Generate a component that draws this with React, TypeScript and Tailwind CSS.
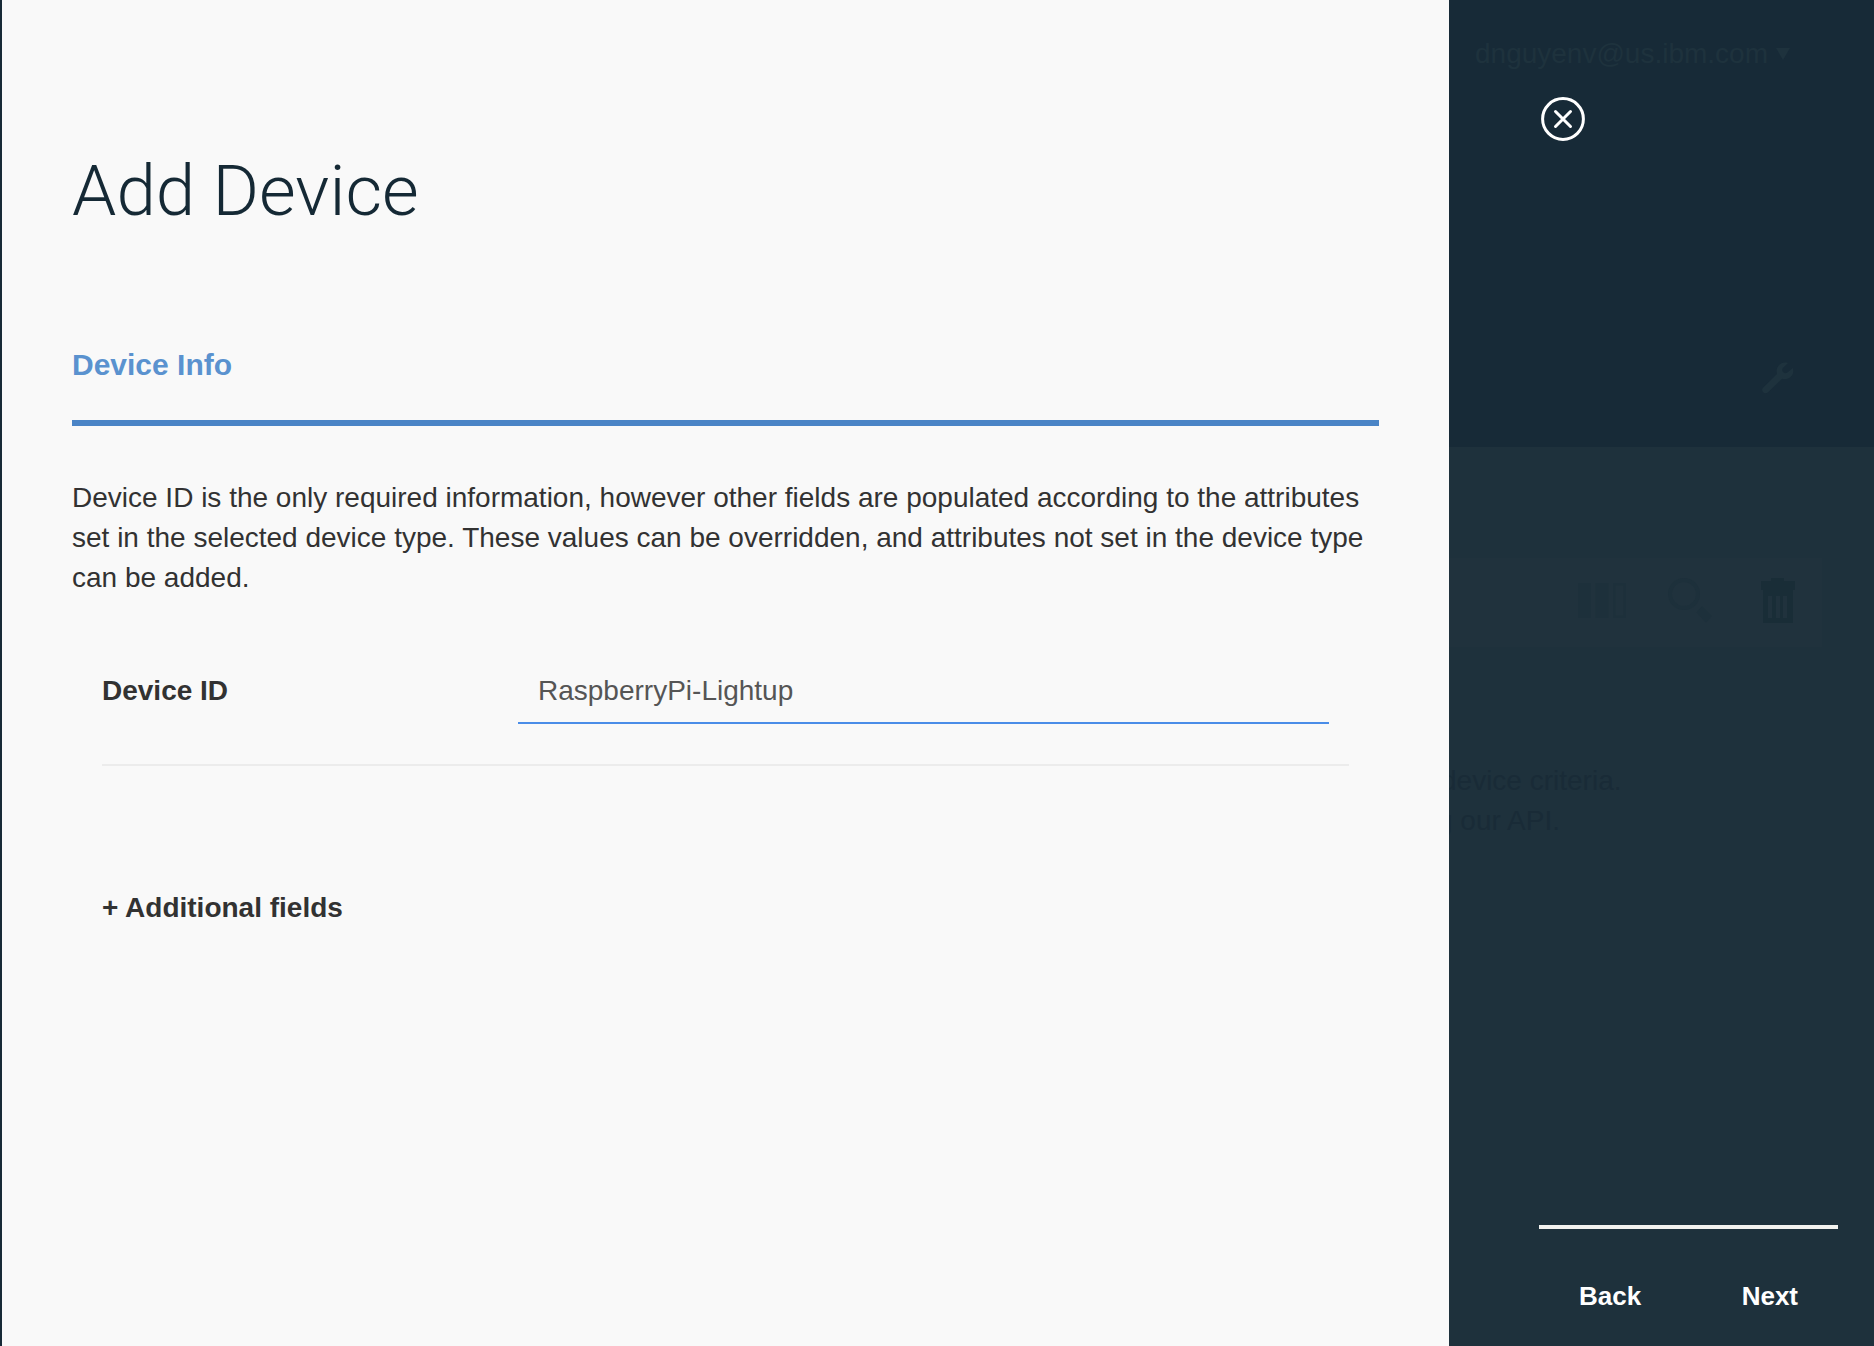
import { useState } from "react";

function CloseIcon() {
  return (
    <svg viewBox="0 0 44 44" className="size-11" fill="none" stroke="currentColor" aria-hidden="true">
      <circle cx="22" cy="22" r="20.4" strokeWidth="3" />
      <path d="M14.500 14.500l15 15M29.500 14.500l-15 15" strokeWidth="3" strokeLinecap="round" />
    </svg>
  );
}

function WrenchIcon() {
  return (
    <svg viewBox="0 0 32 32" className="size-8" aria-hidden="true">
      <path
        d="M26 1C19.500-1 13 4.500 15 12L1.300 25.400a3.300 3.300 0 0 0 4.700 4.800L20 16.800C27.500 18.500 33 12.500 30.800 6L25.500 10.500a3.300 3.300 0 0 1-4.600-4.600z"
        fill="currentColor"
      />
    </svg>
  );
}

function ColumnsIcon() {
  return (
    <svg viewBox="0 0 48 35" className="h-[35px] w-12" aria-hidden="true">
      <path d="M0 0h13v35H0zM17.500 0h13v35h-13z" fill="currentColor" />
      <path d="M36.200 1.200h10.600v32.600H36.200z" fill="none" stroke="currentColor" strokeWidth="2.400" />
    </svg>
  );
}

function SearchIcon() {
  return (
    <svg viewBox="0 0 44 45" className="h-[45px] w-11" aria-hidden="true">
      <circle cx="16" cy="16" r="14" fill="none" stroke="currentColor" strokeWidth="4" />
      <path d="M34 28l10 10-6 6.500-9.500-10z" fill="currentColor" />
    </svg>
  );
}

function TrashIcon() {
  return (
    <svg viewBox="0 0 34 45" className="h-[45px] w-[34px]" aria-hidden="true">
      <path
        fillRule="evenodd"
        d="M10 0h13v3h11v9h-2v33H2V12H0V3h10zM7 18v22h4V18zM15 18v22h4V18zM22 18v22h4V18z"
        fill="currentColor"
      />
    </svg>
  );
}

function DeviceForm() {
  const [deviceId, setDeviceId] = useState("RaspberryPi-Lightup");
  return (
    <section className="min-w-0 flex-1 bg-[#f9f9f9] px-[70px] pt-[151px] text-[28px] leading-10 text-[#323232]">
      <h1 className="font-['Roboto'] text-[71px] leading-20 font-light text-[#152935]">Add Device</h1>
      <h2 className="mt-[114px] border-b-6 border-[#4a84c6] pb-[35px] text-[30px] leading-10 font-bold text-[#5a92cf]">
        Device Info
      </h2>
      <p className="mt-[52px]">
        Device ID is the only required information, however other fields are populated according to the attributes set
        in the selected device type. These values can be overridden, and attributes not set in the device type can be
        added.
      </p>
      <div className="mx-[30px] mt-[73px] flex border-b-2 border-[#ececec] pr-5 pb-10">
        <label htmlFor="device-id" className="w-[416px] shrink-0 font-bold">
          Device ID
        </label>
        <input
          id="device-id"
          type="text"
          value={deviceId}
          onChange={(event) => setDeviceId(event.target.value)}
          className="h-[53px] min-w-0 flex-1 border-b-2 border-[#4a8de8] bg-transparent px-5 pb-3 text-[#555] outline-none"
        />
      </div>
      <button type="button" className="mt-[122px] ml-[30px] block font-bold">
        + Additional fields
      </button>
    </section>
  );
}

function SideColumn() {
  return (
    <aside className="flex w-[425px] shrink-0 flex-col overflow-hidden bg-[#1e313c] text-[28px] leading-10">
      <header className="flex h-[447px] flex-col bg-[#172a37] pt-[34px] text-[#1e323d]">
        <button type="button" className="ml-[26px] flex items-center gap-2 self-start">
          dnguyenv@us.ibm.com
          <svg viewBox="0 0 14 12" className="h-3 w-3.5" aria-hidden="true">
            <path d="M0 0h14L7 12z" fill="currentColor" />
          </svg>
        </button>
        <button type="button" aria-label="Close" className="mt-[23px] ml-[92px] self-start text-white">
          <CloseIcon />
        </button>
        <button type="button" aria-label="Settings" className="mt-[221px] mr-20 self-end">
          <WrenchIcon />
        </button>
      </header>
      <div className="mt-[111px] mr-[52px] flex h-[89px] items-center justify-end gap-[42px] bg-[#20323d] pr-[27px] pb-1 text-[#1d303b]">
        <button type="button" aria-label="Columns">
          <ColumnsIcon />
        </button>
        <button type="button" aria-label="Search">
          <SearchIcon />
        </button>
        <button type="button" aria-label="Delete" className="ml-[7px] text-[#192d37]">
          <TrashIcon />
        </button>
      </div>
      <div className="mt-[114px] whitespace-nowrap text-[#192b37]">
        <p className="-ml-2">device criteria.</p>
        <p className="-ml-3">g our API.</p>
      </div>
      <nav className="mt-auto mr-9 mb-[21px] ml-[90px] flex justify-between border-t-4 border-[#f2f2ef] px-10 pt-[47px] pb-[9px] text-[26px] font-bold text-white">
        <button type="button">Back</button>
        <button type="button">Next</button>
      </nav>
    </aside>
  );
}

export default function App() {
  return (
    <main className="flex min-h-screen border-l-2 border-[#172a37] font-['Liberation_Sans',Arial,sans-serif]">
      <DeviceForm />
      <SideColumn />
    </main>
  );
}
